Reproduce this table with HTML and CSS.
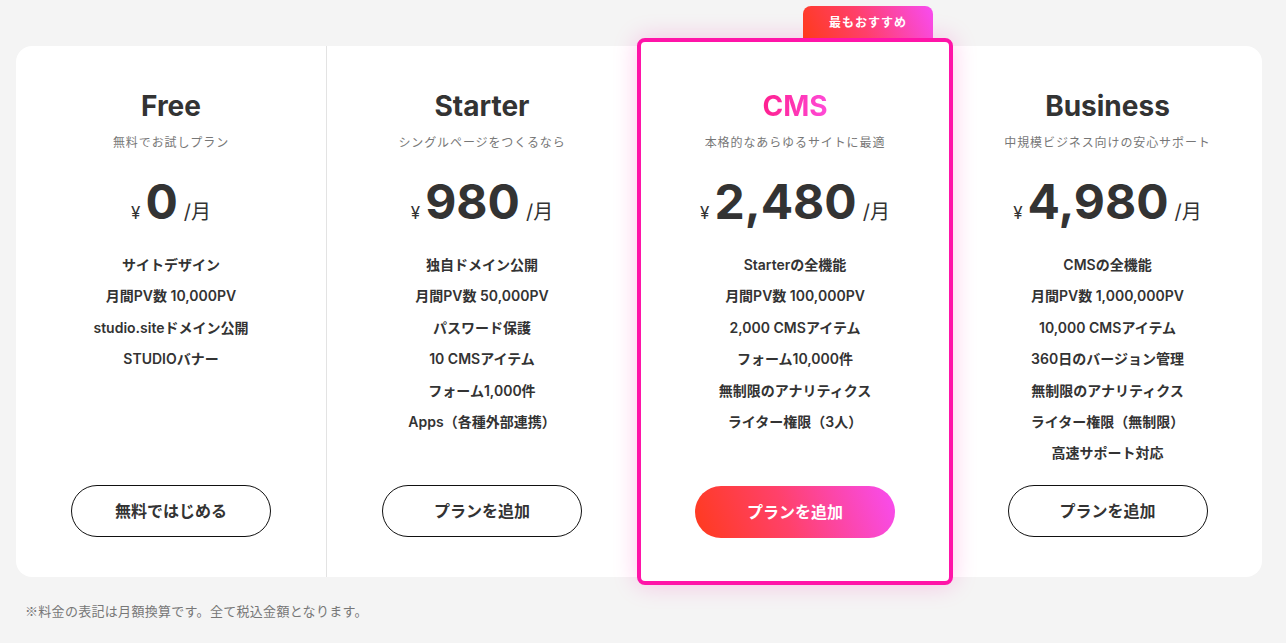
FILE: index.html
```html
<!DOCTYPE html>
<html lang="ja">

<head>
  <meta charset="UTF-8">
  <meta name="viewport" content="width=device-width, initial-scale=1.0">
  <title>料金プラン</title>
  <link rel="stylesheet" href="styles.css">
</head>

<body>
  <div class="pricing">
    <div class="plan-list">
      <!-- Free -->
      <div class="plan plan-free">
        <h2 class="plan-name">Free</h2>
        <p class="plan-desc">無料でお試しプラン</p>
        <div class="plan-price"><span class="yen">¥</span><span class="num">0</span><span class="unit">/月</span></div>
        <ul class="plan-features">
          <li>サイトデザイン</li>
          <li>月間PV数 10,000PV</li>
          <li>studio.siteドメイン公開</li>
          <li>STUDIOバナー</li>
        </ul>
        <a class="plan-button" href="javascript:;">無料ではじめる</a>
      </div>
      <!-- Starter -->
      <div class="plan">
        <h2 class="plan-name">Starter</h2>
        <p class="plan-desc">シングルページをつくるなら</p>
        <div class="plan-price"><span class="yen">¥</span><span class="num">980</span><span class="unit">/月</span></div>
        <ul class="plan-features">
          <li>独自ドメイン公開</li>
          <li>月間PV数 50,000PV</li>
          <li>パスワード保護</li>
          <li>10 CMSアイテム</li>
          <li>フォーム1,000件</li>
          <li>Apps（各種外部連携）</li>
        </ul>
        <a class="plan-button" href="javascript:;">プランを追加</a>
      </div>
      <!-- CMS（おすすめ） -->
      <div class="plan plan-recommend">
        <span class="plan-badge">最もおすすめ</span>
        <h2 class="plan-name">CMS</h2>
        <p class="plan-desc">本格的なあらゆるサイトに最適</p>
        <div class="plan-price"><span class="yen">¥</span><span class="num">2,480</span><span class="unit">/月</span></div>
        <ul class="plan-features">
          <li>Starterの全機能</li>
          <li>月間PV数 100,000PV</li>
          <li>2,000 CMSアイテム</li>
          <li>フォーム10,000件</li>
          <li>無制限のアナリティクス</li>
          <li>ライター権限（3人）</li>
        </ul>
        <a class="plan-button" href="javascript:;">プランを追加</a>
      </div>
      <!-- Business -->
      <div class="plan">
        <h2 class="plan-name">Business</h2>
        <p class="plan-desc">中規模ビジネス向けの安心サポート</p>
        <div class="plan-price"><span class="yen">¥</span><span class="num">4,980</span><span class="unit">/月</span></div>
        <ul class="plan-features">
          <li>CMSの全機能</li>
          <li>月間PV数 1,000,000PV</li>
          <li>10,000 CMSアイテム</li>
          <li>360日のバージョン管理</li>
          <li>無制限のアナリティクス</li>
          <li>ライター権限（無制限）</li>
          <li>高速サポート対応</li>
        </ul>
        <a class="plan-button" href="javascript:;">プランを追加</a>
      </div>
    </div>
    <p class="pricing-note">※料金の表記は月額換算です。全て税込金額となります。</p>
  </div>
</body>

</html>
```

FILE: styles.css
```css
body,
h2,
p,
ul,
li {
  margin: 0px;
  padding: 0px;
}

body {
  background: #f4f4f4;
  color: #333333;
  font-family: Inter, "Noto Sans CJK JP", sans-serif;
}

a {
  text-decoration: none;
  color: #333333;
}

ul {
  list-style: none;
}

.pricing {
  padding: 46px 24px 0px 16px;
}

.plan-list {
  display: grid;
  grid-template-columns: 311px 310px 316px 1fr;
  height: 531px;
  background: #ffffff;
  border-radius: 16px;
}

.plan {
  display: flex;
  flex-direction: column;
  align-items: center;
  padding: 43px 0px 40px 0px;
  text-align: center;
}

.plan-free {
  border-right: 1px solid #e3e3e3;
}

.plan-recommend {
  position: relative;
  margin: -8px 0px;
  padding: 47px 0px 43px 0px;
  border: 4px solid #ff14a8;
  border-radius: 8px;
  background: #ffffff;
  box-shadow: 0px 0px 24px rgba(255, 20, 168, .22);
}

.plan-badge {
  position: absolute;
  top: -36px;
  right: 16px;
  width: 130px;
  height: 32px;
  line-height: 31px;
  border-radius: 8px 8px 0px 0px;
  background: linear-gradient(65deg, #ff3a1c 0%, #ff3f6a 45%, #f84cf2 100%);
  color: #ffffff;
  font-family: "Noto Sans CJK JP", sans-serif;
  font-size: 12px;
  letter-spacing: 1px;
  font-weight: 700;
}

.plan-name {
  font-size: 28px;
  line-height: 34px;
  font-weight: 700;
  color: #333333;
}

.plan-recommend .plan-name {
  background: linear-gradient(90deg, #ff1f8e 0%, #ff4bd8 100%);
  -webkit-background-clip: text;
  background-clip: text;
  color: transparent;
}

.plan-desc {
  margin-top: 11px;
  font-size: 12px;
  letter-spacing: 0.9px;
  line-height: 18px;
  color: #777777;
}

.plan-price {
  display: flex;
  align-items: baseline;
  margin-top: 20px;
  line-height: 60px;
}

.plan-price .yen {
  font-size: 17px;
  margin-right: 5px;
}

.plan-price .num {
  font-size: 48px;
  font-weight: 700;
}

.plan-price .unit {
  font-size: 20px;
  margin-left: 6px;
}

.plan-features {
  margin-top: 6px;
}

.plan-features li {
  font-size: 14px;
  font-weight: 600;
  line-height: 31.4px;
}

.plan-button {
  display: block;
  margin-top: auto;
  width: 200px;
  height: 52px;
  line-height: 50px;
  box-sizing: border-box;
  border: 1px solid #111111;
  border-radius: 26px;
  font-size: 16px;
  font-weight: 600;
}

.plan-recommend .plan-button {
  border: none;
  line-height: 52px;
  color: #ffffff;
  background: linear-gradient(70deg, #ff3a1c 0%, #ff416a 45%, #f84cf2 100%);
}

.pricing-note {
  margin: 24px 0px 0px 9px;
  font-family: "Noto Sans CJK JP", sans-serif;
  font-size: 13px;
  letter-spacing: 0.3px;
  color: #777777;
}
```
